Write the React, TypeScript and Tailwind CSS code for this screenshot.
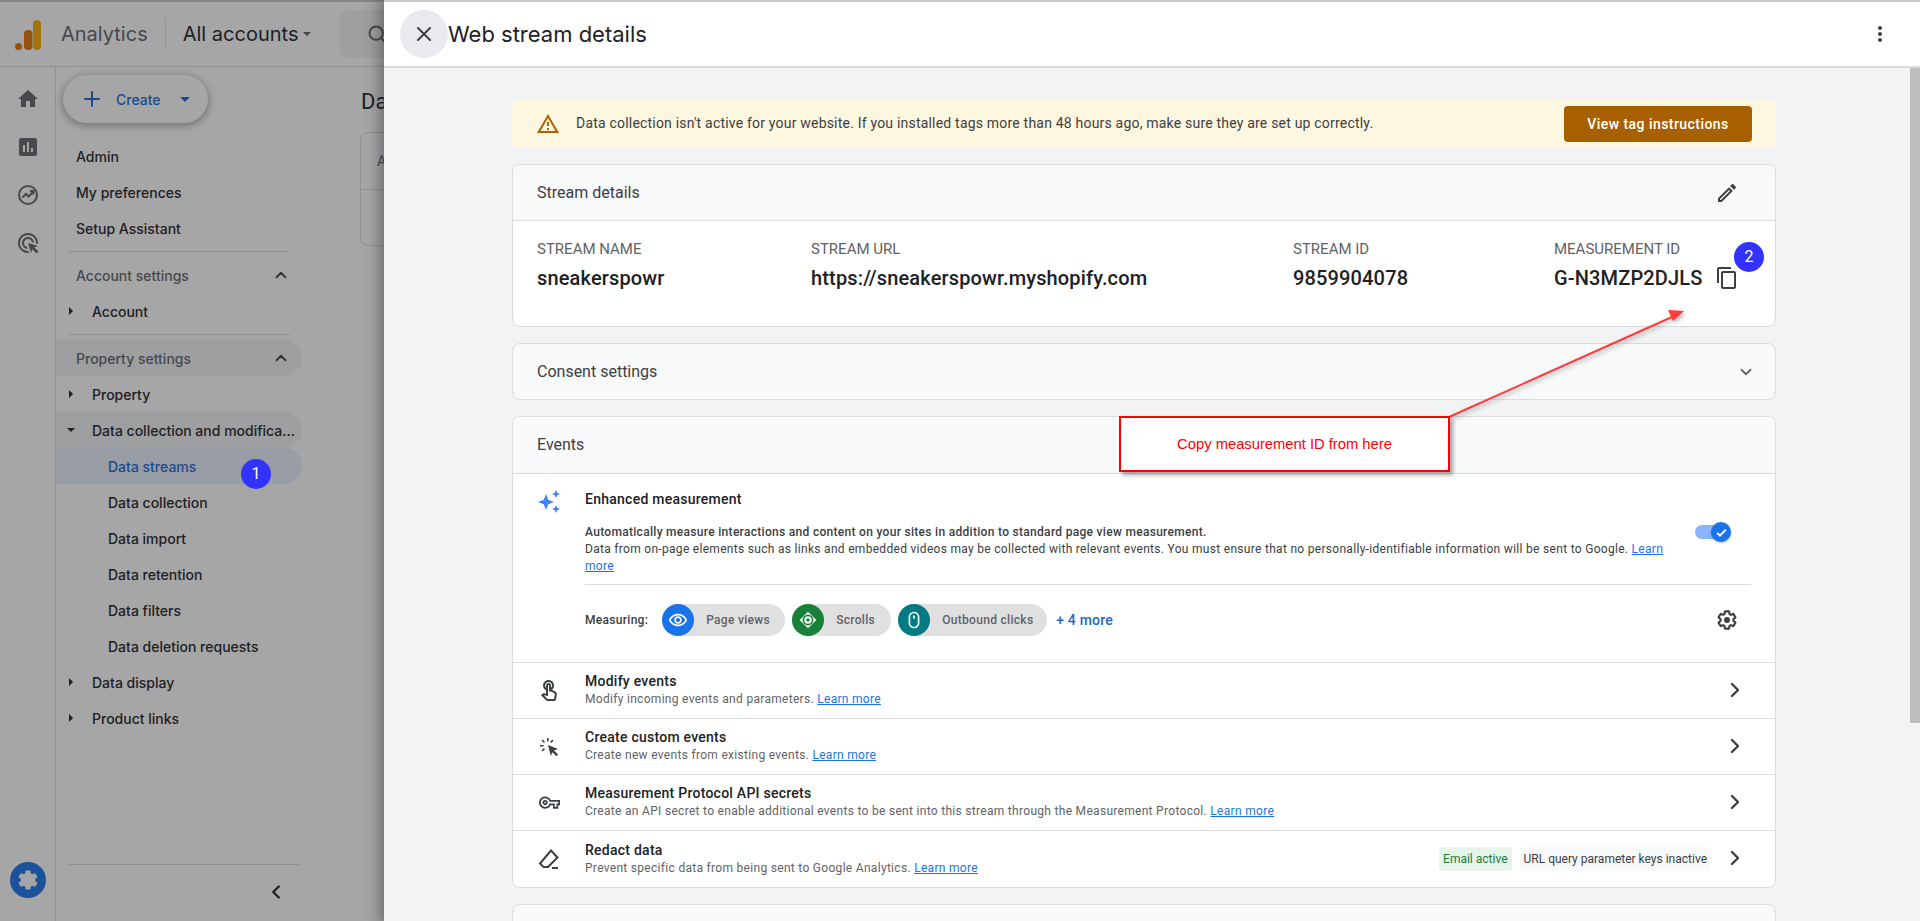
import type { ReactNode } from 'react';
import { ChevronDown, ChevronLeft, ChevronRight, ChevronUp, Plus, Search, X } from 'lucide-react';

const gsans = 'font-["Inter",sans-serif]';

const gearPath =
  'M19.14 12.94c.04-.3.06-.61.06-.94 0-.32-.02-.64-.07-.94l2.03-1.58c.18-.14.23-.41.12-.61l-1.92-3.32c-.12-.22-.37-.29-.59-.22l-2.39.96c-.5-.38-1.03-.7-1.62-.94l-.36-2.54c-.04-.24-.24-.41-.48-.41h-3.84c-.24 0-.43.17-.47.41l-.36 2.54c-.59.24-1.13.57-1.62.94l-2.39-.96c-.22-.08-.47 0-.59.22L2.74 8.87c-.12.21-.08.47.12.61l2.03 1.58c-.05.3-.09.63-.09.94s.02.64.07.94l-2.03 1.58c-.18.14-.23.41-.12.61l1.92 3.32c.12.22.37.29.59.22l2.39-.96c.5.38 1.03.7 1.62.94l.36 2.54c.05.24.24.41.48.41h3.84c.24 0 .44-.17.47-.41l.36-2.54c.59-.24 1.13-.56 1.62-.94l2.39.96c.22.08.47 0 .59-.22l1.92-3.32c.12-.22.07-.47-.12-.61l-2.01-1.58z';

function Ico({ d, className }: { d: string; className?: string }) {
  return (
    <svg viewBox="0 0 24 24" fill="currentColor" className={className}>
      <path d={d} />
    </svg>
  );
}

function Logo() {
  return (
    <svg viewBox="0 0 26 30" className="mt-[2px] h-[30px] w-[26px] shrink-0">
      <rect x="18" y="0" width="8" height="30" rx="4" fill="#f9ab00" />
      <rect x="9" y="10" width="8.5" height="20" rx="4" fill="#e37400" />
      <circle cx="3.5" cy="26.5" r="3.5" fill="#e37400" />
    </svg>
  );
}

function Caret({ open }: { open?: boolean }) {
  return (
    <svg viewBox="0 0 8 8" className="h-[8px] w-[8px] text-[#202124]" fill="currentColor">
      {open ? <path d="M0 2h8L4 6z" /> : <path d="M2 0l4 4-4 4z" />}
    </svg>
  );
}

function NavItem({ label }: { label: string }) {
  return <div className="flex h-9 items-center pl-[76px] text-[#202124]">{label}</div>;
}

function TreeItem({ label, open, active }: { label: string; open?: boolean; active?: boolean }) {
  return (
    <div className={`ml-[56px] flex h-9 w-[246px] items-center rounded-r-full pl-[11px] text-[#202124] ${active ? 'bg-[#f1f3f4]' : ''}`}>
      <span className="mr-[17px] flex w-2 shrink-0"><Caret open={open} /></span>
      <span className="truncate pr-[6px]">{label}</span>
    </div>
  );
}

function SubItem({ label, active }: { label: string; active?: boolean }) {
  return (
    <div className={`ml-[56px] flex h-9 w-[246px] items-center whitespace-nowrap rounded-r-full pl-[52px] ${active ? 'bg-[#e8f0fe] text-[#1967d2]' : 'text-[#202124]'}`}>
      {label}
    </div>
  );
}

function Section({ label, active }: { label: string; active?: boolean }) {
  return (
    <div className={`ml-[56px] flex h-9 w-[246px] items-center justify-between rounded-r-full pl-[20px] pr-[12px] text-[#5f6368] ${active ? 'bg-[#f1f3f4]' : ''}`}>
      {label}
      <ChevronUp className="h-[18px] w-[18px] text-[#3c4043]" strokeWidth={2.4} />
    </div>
  );
}

function Sidebar() {
  return (
    <div className="relative flex h-[921px] w-[384px] flex-col overflow-hidden border-t-2 border-[#c8c8c8] bg-white">
      <div className="flex h-[65px] shrink-0 items-center whitespace-nowrap border-b border-[#dadce0] bg-white pl-[15px]">
        <Logo />
        <span className={`ml-[20px] text-[20px] text-[#5f6368] ${gsans}`}>Analytics</span>
        <span className="ml-[17px] h-[32px] w-px shrink-0 bg-[#dadce0]" />
        <span className={`ml-[17px] text-[20px] text-[#202124] ${gsans}`}>All accounts</span>
        <svg viewBox="0 0 8 4" className="ml-[5px] h-[4px] w-[8px] shrink-0 text-[#5f6368]" fill="currentColor"><path d="M0 0h8L4 4z" /></svg>
        <div className="ml-auto flex h-12 w-[44px] shrink-0 items-center overflow-hidden rounded-l-lg bg-[#f1f3f4] pl-[27px]">
          <Search className="h-[20px] w-[20px] shrink-0 text-[#5f6368]" strokeWidth={2.4} />
        </div>
      </div>
      <div className="flex flex-1">
        <div className="flex w-[56px] flex-col items-center border-r border-[#dadce0] pt-[20px]">
          <Ico d="M10 20v-6h4v6h5v-8h3L12 3 2 12h3v8z" className="h-[24px] w-[24px] text-[#5f6368]" />
          <Ico
            d="M19 3H5c-1.1 0-2 .9-2 2v14c0 1.1.9 2 2 2h14c1.1 0 2-.9 2-2V5c0-1.1-.9-2-2-2zM9 17H7v-7h2v7zm4 0h-2V7h2v10zm4 0h-2v-4h2v4z"
            className="mt-[24px] h-[24px] w-[24px] text-[#5f6368]"
          />
          <svg viewBox="0 0 24 24" fill="none" stroke="currentColor" strokeWidth="2" className="mt-[24px] h-[24px] w-[24px] text-[#5f6368]">
            <circle cx="12" cy="12" r="9" />
            <path d="M6.5 14.5l3.5-3.5 2.5 2.5 5-5M14 8h3.5v3.5" />
          </svg>
          <Ico
            d="M11.71 17.99A5.993 5.993 0 016 12c0-3.31 2.69-6 6-6 3.22 0 5.84 2.53 5.99 5.71l-2.1-.63A3.999 3.999 0 0012 8c-2.21 0-4 1.79-4 4 0 1.9 1.33 3.5 3.12 3.89l.59 2.1zM22 12c0 .3-.01.6-.04.9l-1.97-.59c.01-.1.01-.21.01-.31 0-4.42-3.58-8-8-8s-8 3.58-8 8 3.58 8 8 8c.1 0 .21 0 .31-.01l.59 1.97c-.3.03-.6.04-.9.04-5.52 0-10-4.48-10-10S6.48 2 12 2s10 4.48 10 10zm-3.77 4.26L22 15l-10-3 3 10 1.26-3.77 4.27 4.27 1.98-1.98-4.28-4.26z"
            className="mt-[24px] h-[24px] w-[24px] text-[#5f6368]"
          />
          <div className="mt-auto mb-[23px] flex h-9 w-9 items-center justify-center rounded-full bg-[#1a73e8]">
            <Ico d={gearPath} className="h-[24px] w-[24px] text-white" />
          </div>
        </div>
        <div className="relative flex-1 text-[14px]">
          <span className="absolute left-[305px] top-[18px] whitespace-nowrap text-[22px] text-[#202124]">Data streams</span>
          <div className="absolute left-[304px] top-[65px] h-[114px] w-[100px] rounded-lg border border-[#dadce0]">
            <div className="flex h-[57px] items-center border-b border-[#dadce0] pl-4 text-[#5f6368]">All</div>
          </div>
        </div>
      </div>
    </div>
  );
}

function SidebarNav() {
  return (
    <div className={`absolute left-0 top-[67px] flex w-[302px] flex-col text-[14px] ${gsans}`}>
      <div className="ml-[63px] mt-[8px] flex h-12 w-[145px] items-center rounded-full bg-white pl-[17px] pr-[18px] text-[#1967d2] shadow-[0_2px_6px_2px_rgba(60,64,67,.35)]">
        <Plus className="h-[24px] w-[24px]" strokeWidth={2} />
        <span className="ml-[12px] font-medium">Create</span>
        <svg viewBox="0 0 10 5" className="ml-auto h-[5px] w-[10px]" fill="currentColor"><path d="M0 0h10L5 5z" /></svg>
      </div>
      <div className="mt-[15px] font-medium">
        <NavItem label="Admin" />
        <NavItem label="My preferences" />
        <NavItem label="Setup Assistant" />
      </div>
      <div className="ml-[68px] mr-[12px] mt-[5px] h-px bg-[#dadce0]" />
      <div className="mt-[5px] font-medium">
        <Section label="Account settings" />
        <TreeItem label="Account" />
      </div>
      <div className="ml-[68px] mr-[12px] mt-[5px] h-px bg-[#dadce0]" />
      <div className="mt-[5px] font-medium">
        <Section label="Property settings" active />
        <TreeItem label="Property" />
        <TreeItem label="Data collection and modification" open active />
        <SubItem label="Data streams" active />
        <SubItem label="Data collection" />
        <SubItem label="Data import" />
        <SubItem label="Data retention" />
        <SubItem label="Data filters" />
        <SubItem label="Data deletion requests" />
        <TreeItem label="Data display" />
        <TreeItem label="Product links" />
      </div>
      <div className="ml-[69px] mt-[128px] h-px w-[230px] bg-[#dadce0]" />
      <div className="flex h-[54px] items-center justify-end pr-[15px]">
        <ChevronLeft className="h-[22px] w-[22px] text-[#202124]" strokeWidth={2.6} />
      </div>
    </div>
  );
}

function Banner() {
  return (
    <div className="flex h-[48px] shrink-0 items-center rounded-lg bg-[#fef7e0] pl-[24px] pr-[24px]">
      <Ico d="M12 5.99L19.53 19H4.47L12 5.99M12 2L1 21h22L12 2zm1 14h-2v2h2v-2zm0-6h-2v4h2v-4z" className="h-[24px] w-[24px] text-[#b06000]" />
      <span className="ml-[16px] mb-[2px] text-[14px] tracking-[0.2px] text-[#3c4043]">
        Data collection isn't active for your website. If you installed tags more than 48 hours ago, make sure they are set up correctly.
      </span>
      <button className="ml-auto h-[36px] w-[188px] rounded bg-[#a85f00] text-[14px] font-medium tracking-[0.45px] text-white">View tag instructions</button>
    </div>
  );
}

function Field({ label, value, className, children }: { label: string; value: string; className: string; children?: ReactNode }) {
  return (
    <div className={className}>
      <div className="text-[15px] leading-[20px] text-[#5f6368]">{label}</div>
      <div className="mt-[7px] flex h-[24px] items-center text-[20px] font-medium tracking-[0.15px] text-[#202124]">
        {value}
        {children}
      </div>
    </div>
  );
}

function StreamDetails() {
  return (
    <div className="shrink-0 overflow-hidden rounded-lg border border-[#dadce0] bg-white">
      <div className="flex h-[56px] items-center justify-between border-b border-[#dadce0] bg-[#f8f9fa] pl-[24px] pr-[36px] text-[16px] text-[#3c4043]">
        Stream details
        <Ico
          d="M3 17.25V21h3.75L17.81 9.94l-3.75-3.75L3 17.25zM5.92 19H5v-.92l9.06-9.06.92.92L5.92 19zM20.71 5.63l-2.34-2.34c-.2-.2-.45-.29-.71-.29s-.51.1-.7.29l-1.83 1.83 3.75 3.75 1.83-1.83c.39-.39.39-1.02 0-1.41z"
          className="h-[24px] w-[24px] text-[#3c4043]"
        />
      </div>
      <div className="flex h-[105px] pl-[24px] pt-[18px]">
        <Field label="STREAM NAME" value="sneakerspowr" className="w-[274px]" />
        <Field label="STREAM URL" value="https://sneakerspowr.myshopify.com" className="w-[482px]" />
        <Field label="STREAM ID" value="9859904078" className="w-[261px]" />
        <Field label="MEASUREMENT ID" value="G-N3MZP2DJLS" className="flex-1">
          <Ico
            d="M16 1H4c-1.1 0-2 .9-2 2v14h2V3h12V1zm3 4H8c-1.1 0-2 .9-2 2v14c0 1.1.9 2 2 2h11c1.1 0 2-.9 2-2V7c0-1.1-.9-2-2-2zm0 16H8V7h11v14z"
            className="ml-[12px] h-[24px] w-[24px] text-[#3c4043]"
          />
        </Field>
      </div>
    </div>
  );
}

function Chip({ label, color, width, children }: { label: string; color: string; width: string; children: ReactNode }) {
  return (
    <div className={`flex h-[32px] items-center rounded-full bg-[#e0e0e0] text-[12px] text-[#5f6368] ${width}`}>
      <span className={`flex h-[32px] w-[32px] shrink-0 items-center justify-center rounded-full text-white ${color}`}>{children}</span>
      <span className="ml-[12px] font-medium tracking-[0.3px]">{label}</span>
    </div>
  );
}

function LearnMore() {
  return <span className="text-[#1a73e8] underline">Learn more</span>;
}

function EventRow({ icon, title, text, last, children }: { icon: ReactNode; title: string; text: string; last?: boolean; children?: ReactNode }) {
  return (
    <div className={`flex h-[56px] items-center pl-[24px] pr-[28px] ${last ? '' : 'border-b border-[#dadce0]'}`}>
      <span className="flex w-[24px] justify-center text-[#3c4043]">{icon}</span>
      <div className="ml-[24px]">
        <div className="text-[14px] font-medium leading-[18px] tracking-[0.25px] text-[#202124]">{title}</div>
        <div className="text-[12px] leading-[19px] tracking-[0.3px] text-[#5f6368]">
          {text} <LearnMore />
        </div>
      </div>
      <div className="ml-auto flex items-center">
        {children}
        <ChevronRight className="ml-[12px] mb-[2px] h-[24px] w-[24px] text-[#3c4043]" strokeWidth={2.4} />
      </div>
    </div>
  );
}

function Events() {
  return (
    <div className="shrink-0 overflow-hidden rounded-lg border border-[#dadce0] bg-white">
      <div className="flex h-[57px] items-center border-b border-[#dadce0] bg-[#f8f9fa] pl-[24px] text-[16px] text-[#3c4043]">Events</div>
      <div className="h-[189px] border-b border-[#dadce0] pl-[24px] pr-[24px]">
        <div className="flex pt-[15px]">
          <svg viewBox="0 0 24 24" fill="#4285f4" className="h-[24px] w-[24px] shrink-0">
            <path d="M9 5l2.3 5.7L17 13l-5.7 2.3L9 21l-2.3-5.7L1 13l5.7-2.3zM19 1l1.2 2.8L23 5l-2.8 1.2L19 9l-1.2-2.8L15 5l2.8-1.2zM19 16l1.2 2.8L23 20l-2.8 1.2L19 24l-1.2-2.8L15 20l2.8-1.2z" />
          </svg>
          <div className="ml-[24px] flex-1">
            <div className="text-[14px] font-medium leading-[20px] tracking-[0.25px] text-[#202124]">Enhanced measurement</div>
            <div className="mt-[15px] flex">
              <div className="w-[1085px] text-[12px] leading-[17px] tracking-[0.3px] text-[#3c4043]">
                <div className="font-medium">Automatically measure interactions and content on your sites in addition to standard page view measurement.</div>
                Data from on-page elements such as links and embedded videos may be collected with relevant events. You must ensure that no personally-identifiable information will be sent to Google. <LearnMore />
              </div>
              <div className="relative ml-auto mr-[20px] mt-[-2px] h-[20px] w-[36px] self-start">
                <div className="absolute left-0 top-[3px] h-[14px] w-[26px] rounded-full bg-[#8ab4f8]" />
                <div className="absolute right-0 top-0 flex h-[20px] w-[20px] items-center justify-center rounded-full bg-[#1a73e8] text-white shadow-[0_1px_2px_rgba(60,64,67,.4)]">
                  <svg viewBox="0 0 24 24" fill="none" stroke="currentColor" strokeWidth="3" className="h-[15px] w-[15px]"><path d="M5 12.5l4.5 4.5L19 7.5" /></svg>
                </div>
              </div>
            </div>
            <div className="mt-[9px] h-px bg-[#dadce0]" />
            <div className="mt-[19px] flex items-center">
              <span className="text-[12px] font-medium tracking-[0.3px] text-[#3c4043]">Measuring:</span>
              <div className="ml-[14px] flex items-center gap-[7px]">
                <Chip label="Page views" color="bg-[#1a73e8]" width="w-[123px]">
                  <Ico d="M12 6.5c3.79 0 7.17 2.13 8.82 5.5-1.65 3.37-5.02 5.5-8.82 5.5S4.83 15.37 3.18 12C4.83 8.63 8.21 6.5 12 6.5m0-2C7 4.5 2.73 7.61 1 12c1.73 4.39 6 7.5 11 7.5s9.27-3.11 11-7.5C21.27 7.61 17 4.5 12 4.5zm0 5c1.38 0 2.5 1.12 2.5 2.5s-1.12 2.5-2.5 2.5-2.5-1.12-2.5-2.5 1.12-2.5 2.5-2.5m0-2c-2.48 0-4.5 2.02-4.5 4.5s2.02 4.5 4.5 4.5 4.5-2.02 4.5-4.5-2.02-4.5-4.5-4.5z" className="h-[20px] w-[20px]" />
                </Chip>
                <Chip label="Scrolls" color="bg-[#188038]" width="w-[99px]">
                  <svg viewBox="0 0 24 24" className="h-[20px] w-[20px]">
                    <path d="M12 2l10 10-10 10L2 12z" fill="#fff" />
                    <circle cx="12" cy="12" r="6.5" fill="#188038" />
                    <circle cx="12" cy="12" r="4.5" fill="#fff" />
                    <circle cx="12" cy="12" r="2" fill="#188038" />
                  </svg>
                </Chip>
                <Chip label="Outbound clicks" color="bg-[#007b83]" width="w-[149px]">
                  <svg viewBox="0 0 24 24" fill="none" stroke="currentColor" strokeWidth="2" className="h-[20px] w-[20px]">
                    <rect x="6.5" y="3" width="11" height="18" rx="5.5" />
                    <path d="M12 6.5v4" />
                  </svg>
                </Chip>
              </div>
              <span className="ml-[9px] text-[14px] font-medium tracking-[0.2px] text-[#1967d2]">+ 4 more</span>
              <svg viewBox="0 0 24 24" className="ml-auto mr-[12px] h-[24px] w-[24px] text-[#3c4043]" fill="none" stroke="currentColor" strokeWidth="2.4">
                <path d={gearPath} transform="translate(1.2 1.2) scale(.9)" />
                <circle cx="12" cy="12" r="3" fill="currentColor" stroke="none" />
              </svg>
            </div>
          </div>
        </div>
      </div>
      <EventRow
        title="Modify events"
        text="Modify incoming events and parameters."
        icon={<Ico d="M18.19 12.44l-3.24-1.62c1.29-1 2.12-2.56 2.12-4.32 0-3.03-2.47-5.5-5.5-5.5s-5.5 2.47-5.5 5.5c0 2.13 1.22 3.98 3 4.89v3.26c-2.15-.46-2.02-.44-2.26-.44-.53 0-1.03.21-1.41.59L4 16.22l5.09 5.09C9.52 21.75 10.12 22 10.74 22h6.3c.98 0 1.81-.7 1.97-1.67l.8-4.71c.22-1.3-.43-2.58-1.62-3.18zm-.35 2.85l-.8 4.71h-6.3c-.09 0-.17-.04-.24-.1l-3.68-3.68 4.25.89V6.5c0-.28.22-.5.5-.5s.5.22.5.5v6h1.76l3.46 1.73c.4.2.62.63.55 1.06zM8.07 6.5c0-1.93 1.57-3.5 3.5-3.5s3.5 1.57 3.5 3.5c0 .95-.38 1.81-1 2.44V6.5c0-1.38-1.12-2.5-2.5-2.5s-2.5 1.12-2.5 2.5v2.44c-.62-.63-1-1.49-1-2.44z" className="h-[24px] w-[24px]" />}
      />
      <EventRow
        title="Create custom events"
        text="Create new events from existing events."
        icon={
          <svg viewBox="0 0 24 24" fill="currentColor" className="h-[24px] w-[24px]">
            <path d="M11 10l10 4-4 1.6 4 4-1.6 1.6-4-4L13.8 21z" />
            <path d="M10 3h1.6v3.6H10zM3 10h3.6v1.6H3zM4.6 5.7l1.1-1.1 2.3 2.3-1.1 1.1zM15.4 4.6l1.1 1.1-2.3 2.3-1.1-1.1zM5.7 16.5l-1.1-1.1 2.3-2.3 1.1 1.1z" />
          </svg>
        }
      />
      <EventRow
        title="Measurement Protocol API secrets"
        text="Create an API secret to enable additional events to be sent into this stream through the Measurement Protocol."
        icon={<Ico d="M22 19h-6v-4h-2.68c-1.14 2.42-3.6 4-6.32 4-3.86 0-7-3.14-7-7s3.14-7 7-7c2.72 0 5.17 1.58 6.32 4H24v6h-2v4zm-4-2h2v-4h2v-2H11.94l-.23-.67C11.01 8.34 9.11 7 7 7c-2.76 0-5 2.24-5 5s2.24 5 5 5c2.11 0 4.01-1.34 4.71-3.33l.23-.67H18v4zM7 15c-1.65 0-3-1.35-3-3s1.35-3 3-3 3 1.35 3 3-1.35 3-3 3zm0-4c-.55 0-1 .45-1 1s.45 1 1 1 1-.45 1-1-.45-1-1-1z" className="h-[21px] w-[21px]" />}
      />
      <EventRow
        last
        title="Redact data"
        text="Prevent specific data from being sent to Google Analytics."
        icon={
          <svg viewBox="0 0 24 24" fill="none" stroke="currentColor" strokeWidth="2" className="h-[24px] w-[24px]">
            <path d="M14 3.5l6.5 7L11 20H6.5L3 16.5z" />
            <path d="M15 21h6" />
          </svg>
        }
      >
        <span className="flex h-[24px] items-center rounded-sm bg-[#e6f4ea] px-1 text-[12px] text-[#188038]">Email active</span>
        <span className="ml-[8px] flex h-[24px] items-center rounded-sm bg-[#f8f9fa] px-1 text-[12px] text-[#3c4043]">URL query parameter keys inactive</span>
      </EventRow>
    </div>
  );
}

function Drawer() {
  return (
    <div className="absolute left-[384px] top-0 flex h-[921px] w-[1536px] flex-col overflow-hidden bg-[#f1f3f4] shadow-[0_0_14px_4px_rgba(32,33,36,.45)]">
      <div className="flex h-[68px] shrink-0 items-center border-y-2 border-t-[#c8c8c8] border-b-[#dadce0] bg-white pl-[16px] pr-[28px]">
        <span className="flex h-12 w-12 items-center justify-center rounded-full bg-[#e8eaed] text-[#3c4043]">
          <X className="h-[24px] w-[24px]" strokeWidth={2} />
        </span>
        <span className={`text-[22px] text-[#202124] ${gsans}`}>Web stream details</span>
        <Ico
          d="M12 8c1.1 0 2-.9 2-2s-.9-2-2-2-2 .9-2 2 .9 2 2 2zm0 2c-1.1 0-2 .9-2 2s.9 2 2 2 2-.9 2-2-.9-2-2-2zm0 6c-1.1 0-2 .9-2 2s.9 2 2 2 2-.9 2-2-.9-2-2-2z"
          className="ml-auto h-[24px] w-[24px] text-[#3c4043]"
        />
      </div>
      <div className="flex min-h-0 flex-1">
        <div className="flex w-[1526px] flex-col gap-[16px] pl-[128px] pr-[134px] pt-[32px]">
          <Banner />
          <StreamDetails />
          <div className="flex h-[57px] shrink-0 items-center justify-between rounded-lg border border-[#dadce0] bg-[#f8f9fa] pl-[24px] pr-[20px] text-[16px] text-[#3c4043]">
            Consent settings
            <ChevronDown className="h-[18px] w-[18px] text-[#5f6368]" strokeWidth={2.4} />
          </div>
          <Events />
          <div className="h-[60px] shrink-0 rounded-lg border border-[#dadce0] bg-[#f8f9fa]" />
        </div>
        <div className="w-[10px]">
          <div className="h-[655px] bg-[#bdbdbd]" />
        </div>
      </div>
    </div>
  );
}

// annotations pasted over the screenshot
function Annotations() {
  return (
    <>
      <span className="absolute left-[241px] top-[459px] flex h-[30px] w-[30px] items-center justify-center rounded-full bg-[#3333ff] text-[16px] text-white">1</span>
      <span className="absolute left-[1734px] top-[242px] flex h-[30px] w-[30px] items-center justify-center rounded-full bg-[#3333ff] text-[16px] text-white">2</span>
      <svg viewBox="0 0 1920 921" className="pointer-events-none absolute left-0 top-0 h-[921px] w-[1920px] drop-shadow-[2px_2px_2px_rgba(0,0,0,.3)]">
        <path d="M1449 417L1672 317" stroke="#ff3b3b" strokeWidth="2" />
        <path d="M1684 311l-16-1 5 11z" fill="#ff3b3b" />
      </svg>
      <div className="absolute left-[1119px] top-[416px] flex h-[56px] w-[331px] items-center justify-center border-2 border-[#ff0000] bg-white font-['Liberation_Sans',sans-serif] text-[14.75px] text-[#ff0000] shadow-[3px_3px_4px_rgba(0,0,0,.35)]">
        Copy measurement ID from here
      </div>
    </>
  );
}

export default function App() {
  return (
    <div className="relative h-[921px] w-[1920px] overflow-hidden font-['Roboto',sans-serif]">
      <Sidebar />
      <SidebarNav />
      <div className="absolute inset-0 bg-[#202124]/40" />
      <Drawer />
      <Annotations />
    </div>
  );
}
